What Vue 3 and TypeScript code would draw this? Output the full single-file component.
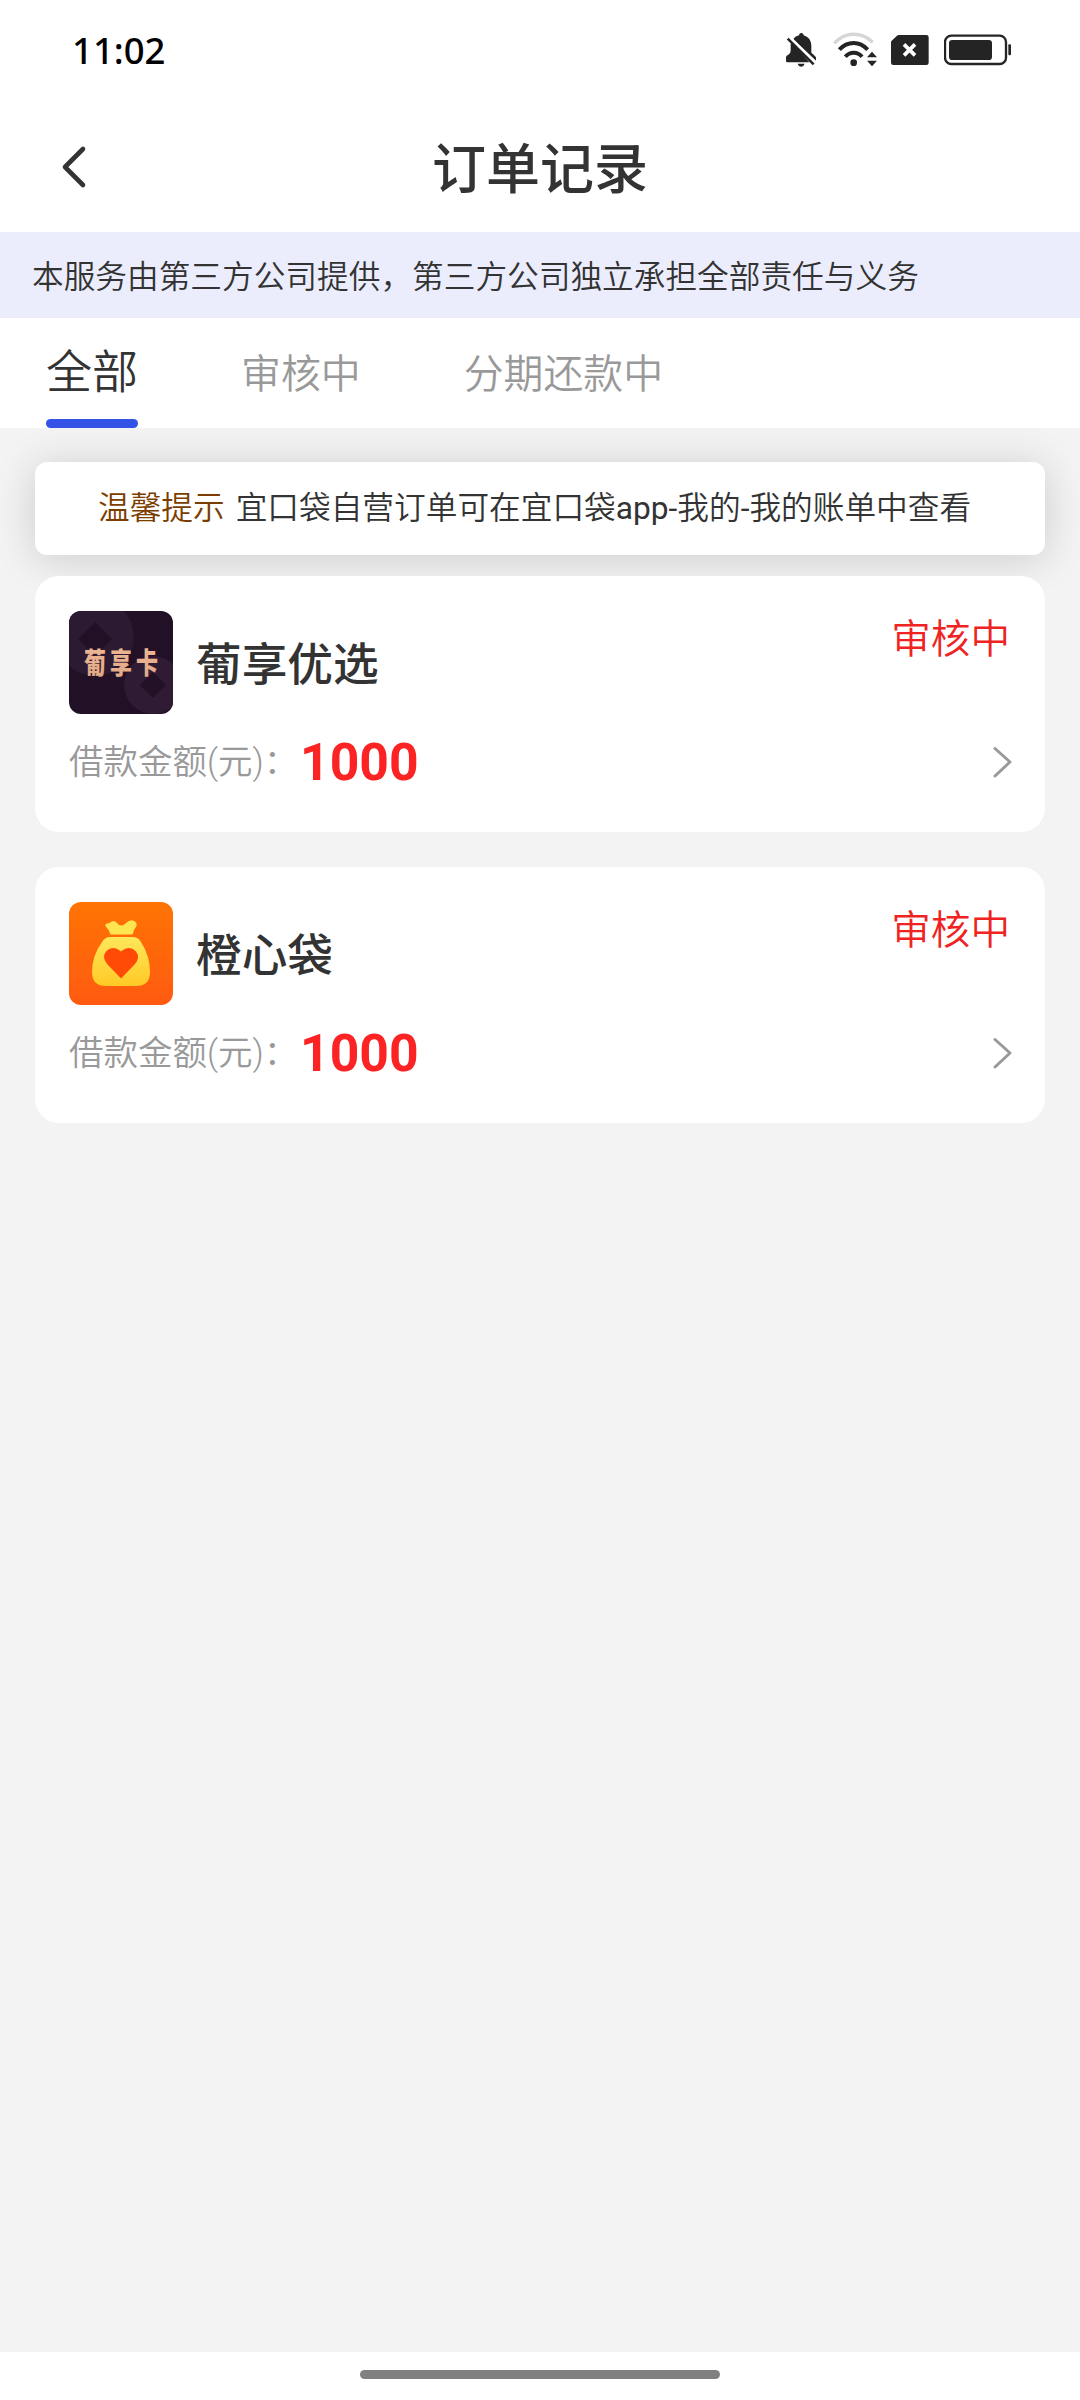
<script setup lang="ts">
import { ref } from 'vue'

interface Order {
  id: number
  name: string
  logo: 'card' | 'bag'
  amount: number
  status: string
}

const tabs = ['全部', '审核中', '分期还款中']
const active = ref(0)

const orders: Order[] = [
  { id: 1, name: '葡享优选', logo: 'card', amount: 1000, status: '审核中' },
  { id: 2, name: '橙心袋', logo: 'bag', amount: 1000, status: '审核中' },
]
</script>

<template>
  <div class="page">
    <div class="statusbar">
      <span class="clock">11:02</span>
      <div class="indicators">
        <!-- muted bell -->
        <svg class="i-bell" viewBox="78 66 90 108">
          <path d="M99 88 Q107 78 117 76 Q118 69 124 69 Q130 69 131 76 Q152 82 154 106 V128 Q162 134 168 142 V152 Z" fill="#242424" />
          <path d="M92 102 Q94 98 96 98 L148 157 H82 Q78 157 78 153 V141 Q79 137 84 135 Q92 131 92 122 Z" fill="#242424" />
          <path d="M88 81 L166 158" stroke="#fff" stroke-width="9" />
          <path d="M83 86 L161 163" stroke="#242424" stroke-width="7.5" />
          <path d="M113 161 H134 Q131 170 124 170 Q116 170 113 161 Z" fill="#242424" />
        </svg>
        <!-- wifi -->
        <svg class="i-wifi" viewBox="219 66 135 108" fill="none">
          <path d="M223 100 Q248 73 281 73 Q314 73 338 97" stroke="#d6d6d6" stroke-width="10.5" />
          <path d="M238 119 Q256 99 281 99 Q305 99 323 119" stroke="#242424" stroke-width="12" />
          <path d="M256 140 Q266 128 281 128 Q296 128 306 140" stroke="#242424" stroke-width="12" />
          <circle cx="281" cy="158" r="10" fill="#242424" />
          <path d="M336 125 L351 142 H321 Z M336 169 L351 152 H321 Z" fill="#242424" />
        </svg>
        <!-- missing sim -->
        <svg class="i-sim" viewBox="393 66 114 108">
          <path d="M416 75 H499 Q506 75 506 82 V158 Q506 165 499 165 H400 Q393 165 393 158 V97 Q393 94 395 92 L411 77 Q413 75 416 75 Z" fill="#242424" />
          <path d="M432 103 L465 136 M465 103 L432 136" stroke="#fff" stroke-width="11" />
        </svg>
        <!-- battery -->
        <svg class="i-bat" viewBox="552 66 204 108">
          <rect x="555" y="77" width="183" height="85" rx="19" fill="none" stroke="#242424" stroke-width="7" />
          <rect x="567" y="90" width="129" height="60" rx="10" fill="#242424" />
          <rect x="745" y="103" width="8" height="33" rx="3" fill="#242424" />
        </svg>
      </div>
    </div>

    <header class="navbar">
      <svg class="back" viewBox="0 0 30 46" fill="none">
        <path d="M24 5 L6 23 L24 41" stroke="#333" stroke-width="4.600" stroke-linecap="round" stroke-linejoin="round" />
      </svg>
      <h1>订单记录</h1>
    </header>

    <div class="notice">本服务由第三方公司提供，第三方公司独立承担全部责任与义务</div>

    <nav class="tabs">
      <button
        v-for="(t, i) in tabs"
        :key="t"
        class="tab"
        :class="{ active: active === i }"
        @click="active = i"
      >
        <span>{{ t }}</span>
      </button>
    </nav>

    <main class="content">
      <div class="tip"><span class="tip-label">温馨提示</span><span>宜口袋自营订单可在宜口袋<b class="latin">app-</b>我的<b class="latin">-</b>我的账单中查看</span></div>

      <section v-for="o in orders" :key="o.id" class="card">
        <div class="card-head">
          <svg v-if="o.logo === 'card'" class="logo" viewBox="0 0 104 103">
            <defs>
              <linearGradient id="gold" x1="0" y1="0" x2="0" y2="1">
                <stop offset="0" stop-color="#f0b995" />
                <stop offset="1" stop-color="#dfa684" />
              </linearGradient>
            </defs>
            <rect width="104" height="103" fill="#211026" />
            <circle cx="26" cy="26" r="39" fill="#2c1932" />
            <path d="M26 11 L43 28 L26 44 L9 28 Z" fill="#211026" />
            <circle cx="84" cy="74" r="29" fill="#301b34" />
            <path d="M84 61 L97 74 L84 87 L71 74 Z" fill="#211026" />
            <text class="logo-text" transform="translate(15 63) scale(1 1.320)" fill="url(#gold)">葡享卡</text>
          </svg>
          <svg v-else class="logo" viewBox="0 0 104 103">
            <defs>
              <linearGradient id="orange" x1="0" y1="0" x2="0" y2="1">
                <stop offset="0" stop-color="#ff7404" />
                <stop offset="1" stop-color="#ff5a10" />
              </linearGradient>
              <linearGradient id="yellow" x1="0" y1="0" x2="0" y2="1">
                <stop offset="0" stop-color="#ffe75a" />
                <stop offset="1" stop-color="#ffc926" />
              </linearGradient>
            </defs>
            <rect width="104" height="103" fill="url(#orange)" />
            <path d="M41 31.500 Q40 27.500 36.700 24.500 Q35.500 22.500 38 21.500 Q40 21.500 42 20 Q45 17.500 48 21 Q51.500 25.500 56 22 Q60 17.500 64 18.500 Q68.500 20 67.500 24 Q64.500 27.500 64 31.500 Q64 32.500 62.500 32.500 H42.500 Q41 32.500 41 31.500 Z" fill="#ffe54f" />
            <path d="M41 35 H64 Q69 35 72 40 Q81 54 81 70 Q81 84 67 84 H37 Q23 84 23 70 Q23 54 33 40 Q36 35 41 35 Z" fill="url(#yellow)" />
            <path d="M52 76.500 L38.500 62.500 Q32.500 55.500 37 49.500 Q43 43.500 50 48 L52 49.500 L54 48 Q61 43.500 67 49.500 Q71.500 55.500 66 62 Z" fill="#ff4b05" />
          </svg>
          <h2>{{ o.name }}</h2>
          <span class="state">{{ o.status }}</span>
        </div>
        <div class="card-row">
          <span class="label">借款金额(元)：</span>
          <strong>{{ o.amount }}</strong>
          <svg class="more" viewBox="0 0 22 34" fill="none">
            <path d="M3 3.500 L18 17 L3 31" stroke="#999" stroke-width="3" stroke-linecap="round" stroke-linejoin="round" />
          </svg>
        </div>
      </section>
    </main>

    <footer class="homebar"><i></i></footer>
  </div>
</template>

<style>
body {
  margin: 0;
  background: #fff;
}
</style>

<style scoped>
.page {
  width: 1080px;
  height: 2400px;
  display: flex;
  flex-direction: column;
  background: #fff;
  color: #333;
  font-family: Roboto, "Noto Sans CJK SC", sans-serif;
  font-weight: 350;
  overflow: hidden;
}
.statusbar {
  height: 100px;
  box-sizing: border-box;
  padding: 0 68px 0 72px;
  display: flex;
  justify-content: space-between;
  flex: none;
}
.clock {
  font: 500 36.500px/40px "Noto Sans", sans-serif;
  letter-spacing: 0;
  margin-top: 30px;
  color: #000;
}
.indicators {
  display: flex;
  margin-top: 32px;
}
.indicators svg {
  height: 36px;
}
.i-bell { width: 30px; margin-right: 17px; }
.i-wifi { width: 45px; margin-right: 13px; }
.i-sim { width: 38px; margin-right: 15px; }
.i-bat { width: 68px; }
.navbar {
  height: 132px;
  flex: none;
  display: grid;
  grid-template-columns: 150px 1fr 150px;
  align-items: start;
}
.back {
  width: 30px;
  height: 46px;
  margin: 44px 0 0 58.500px;
}
h1 {
  margin: 31px 0 0;
  font-size: 54px;
  line-height: 80px;
  font-weight: 500;
  text-align: center;
}
.notice {
  height: 86px;
  flex: none;
  background: #ebedfc;
  font-size: 31.680px;
  line-height: 91px;
  padding-left: 32px;
  box-sizing: border-box;
  white-space: nowrap;
}
.tabs {
  height: 110px;
  flex: none;
  display: flex;
  padding-left: 46px;
  background: #fff;
  position: relative;
  z-index: 1;
}
.tab {
  border: 0;
  background: none;
  padding: 0;
  margin-right: 103px;
  font-family: inherit;
  font-weight: inherit;
  font-size: 39.900px;
  line-height: 113px;
  color: #999;
  display: flex;
  flex-direction: column;
  height: 110px;
}
.tab.active {
  font-size: 46px;
  color: #333;
}
.tab span {
  height: 101px;
}
.tab.active span {
  line-height: 108px;
}
.tab.active::after {
  content: "";
  height: 9px;
  width: 100%;
  border-radius: 5px;
  background: #3352e6;
}
.content {
  flex: 1;
  background: #f3f3f3;
  padding: 34px 35px 0;
}
.tip {
  height: 93px;
  border-radius: 12px;
  background: #fff;
  box-shadow: 0 4px 42px rgba(0, 0, 0, 0.16);
  margin-bottom: 21px;
  padding-left: 63px;
  font-size: 31.680px;
  line-height: 94px;
  white-space: nowrap;
}
.tip-label {
  color: #7c3e00;
  margin-right: 11px;
}
.latin {
  font-weight: 400;
}
.card {
  position: relative;
  height: 256px;
  box-sizing: border-box;
  border-radius: 24px;
  background: #fff;
  margin-bottom: 35px;
  padding: 35px 35px 0 34px;
}
.card-head {
  display: flex;
  height: 103px;
}
.logo {
  width: 104px;
  height: 103px;
  border-radius: 12px;
  flex: none;
}
.logo-text {
  font-size: 22px;
  font-weight: 900;
  letter-spacing: 4px;
  font-family: "Noto Sans CJK SC", sans-serif;
}
h2 {
  margin: 0 0 0 23px;
  font-size: 45.700px;
  line-height: 110px;
  font-weight: 500;
  flex: 1;
}
.state {
  color: #f02323;
  font-size: 39.600px;
  line-height: 58px;
}
.card-row {
  display: flex;
  align-items: center;
  height: 96px;
}
.label {
  font-size: 34.500px;
  line-height: 50px;
  color: #999;
  width: 231px;
  white-space: nowrap;
}
strong {
  font-size: 51.700px;
  font-weight: 700;
  color: #fb2323;
  flex: 1;
}
.more {
  width: 22px;
  height: 34px;
  margin-right: -4px;
}
.homebar {
  height: 48px;
  flex: none;
  display: flex;
  justify-content: center;
  align-items: flex-start;
}
.homebar i {
  width: 360px;
  height: 9px;
  margin-top: 18px;
  border-radius: 5px;
  background: #808080;
}
</style>
